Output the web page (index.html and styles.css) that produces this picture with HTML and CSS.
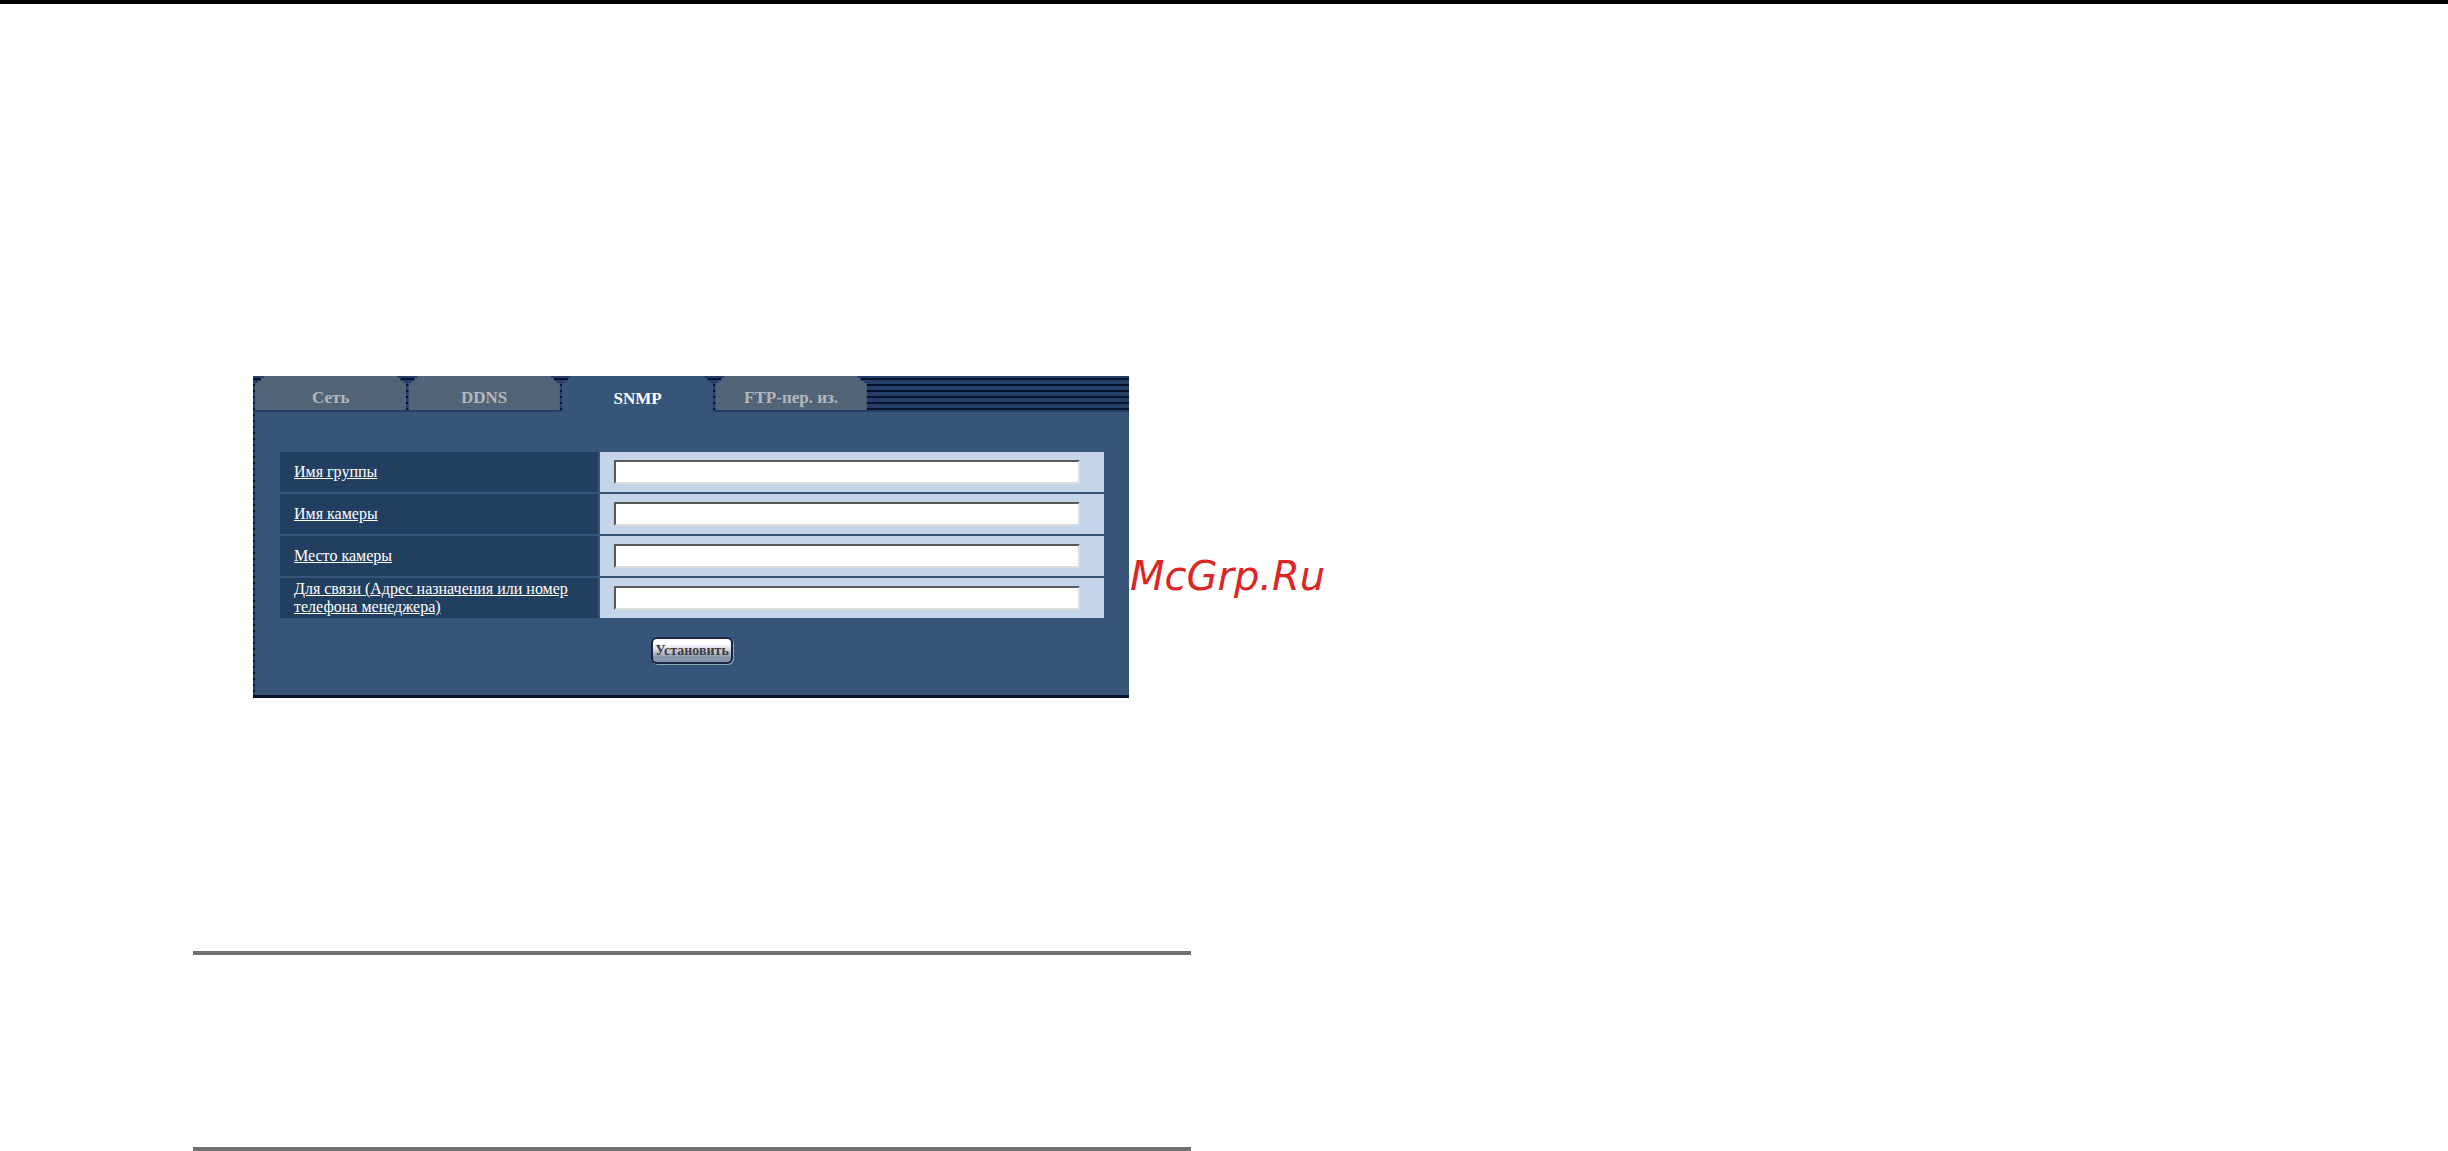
FILE: index.html
```html
<!DOCTYPE html>
<html lang="ru">
<head>
    <meta charset="UTF-8">
    <title>SNMP</title>
    <link rel="stylesheet" href="styles.css">
</head>
<body>
    <div class="page">
        <div class="panel">
            <nav class="tabs">
                <ul>
                    <li><a href="#">Сеть</a></li>
                    <li><a href="#">DDNS</a></li>
                    <li><a href="#" class="on">SNMP</a></li>
                    <li><a href="#">FTP-пер. из.</a></li>
                </ul>
            </nav>
            <form class="content">
                <table>
                    <tr>
                        <th><label for="group">Имя группы</label></th>
                        <td><input type="text" id="group"></td>
                    </tr>
                    <tr>
                        <th><label for="name">Имя камеры</label></th>
                        <td><input type="text" id="name"></td>
                    </tr>
                    <tr>
                        <th><label for="place">Место камеры</label></th>
                        <td><input type="text" id="place"></td>
                    </tr>
                    <tr>
                        <th><label for="contact">Для связи (Адрес назначения или номер телефона менеджера)</label></th>
                        <td><input type="text" id="contact"></td>
                    </tr>
                </table>
                <button type="button">Установить</button>
            </form>
        </div>
        <div class="site">McGrp.Ru</div>
        <hr>
        <hr class="last">
    </div>
</body>
</html>
```
FILE: styles.css
```css
*{
    margin: 0;
    padding: 0;
    box-sizing: border-box;
}
body{
    background-color: #fff;
    border-top: 4px solid #000;
    font-family: "Liberation Serif", "Times New Roman", serif;
}
.page{
    display: grid;
    grid-template-columns: 60px 876fr 62px 1257fr;
    padding: 372px 0 0 193px;
}
.panel{
    grid-column: 2;
    padding-left: 2px;
    border-bottom: 3px solid #06122a;
    background: repeating-linear-gradient(#243f68 0 2px, #06122a 2px 4px, #243f68 4px 6px);
}

/* tabs */
.tabs{
    height: 36px;
    background: linear-gradient(#243f68, #243f68) bottom / 100% 2px no-repeat;
}
.tabs ul{
    display: flex;
    gap: 2px;
    width: 70%;
    list-style: none;
}
.tabs li{
    flex: 1;
}
.tabs a{
    display: block;
    height: 34px;
    line-height: 44px;
    text-align: center;
    text-decoration: none;
    font-size: 17px;
    font-weight: bold;
    color: #b4b8bc;
    background-color: #526478;
    clip-path: polygon(9px 0, calc(100% - 9px) 0, calc(100% - 9px) 2px, calc(100% - 6px) 2px, calc(100% - 6px) 5px, calc(100% - 3px) 5px, calc(100% - 3px) 7px, 100% 7px, 100% 100%, 0 100%, 0 7px, 3px 7px, 3px 5px, 6px 5px, 6px 2px, 9px 2px);
}
.tabs a.on{
    height: 36px;
    line-height: 46px;
    color: #fff;
    background-color: #365578;
}

/* form */
.content{
    padding: 40px 25px 31px;
    background-color: #365578;
}
.content table{
    width: 100%;
    table-layout: fixed;
    border-spacing: 0;
}
.content th,
.content td{
    height: 42px;
    padding: 0 14px;
    border-bottom: 2px solid #365578;
}
.content th{
    width: 320px;
    border-right: 2px solid #365578;
    background-color: #233f5f;
    font-size: 16px;
    font-weight: normal;
    line-height: 18px;
    text-align: left;
    text-decoration: underline;
    color: #fff;
}
.content td{
    padding-right: 24px;
    background-color: #c4d4e9;
}
.content input{
    display: block;
    width: 100%;
    height: 24px;
    border: 2px solid;
    border-color: #5a5a5a #dcdcdc #dcdcdc #5a5a5a;
    background-color: #fff;
}
.content button{
    display: block;
    height: 27px;
    margin: 17px auto 0;
    padding: 0 2px;
    border: 2px solid #1c2548;
    border-radius: 6px;
    box-shadow: 1px 1px 0 #8fa9b8;
    background: linear-gradient(#fff 20%, #e2e2ec 40%, #8796a8 80%);
    font-family: inherit;
    font-size: 14px;
    font-weight: bold;
    color: #3c3c40;
}

.site{
    grid-column: 3 / -1;
    padding: 177px 0 0 1px;
    font-family: "DejaVu Sans", sans-serif;
    font-size: 40px;
    font-style: italic;
    line-height: 46px;
    color: #dc2626;
}
hr{
    grid-column: 1 / 4;
    height: 4px;
    margin-top: 253px;
    border: 0;
    background-color: #707070;
}
hr.last{
    margin-top: 192px;
}
```
